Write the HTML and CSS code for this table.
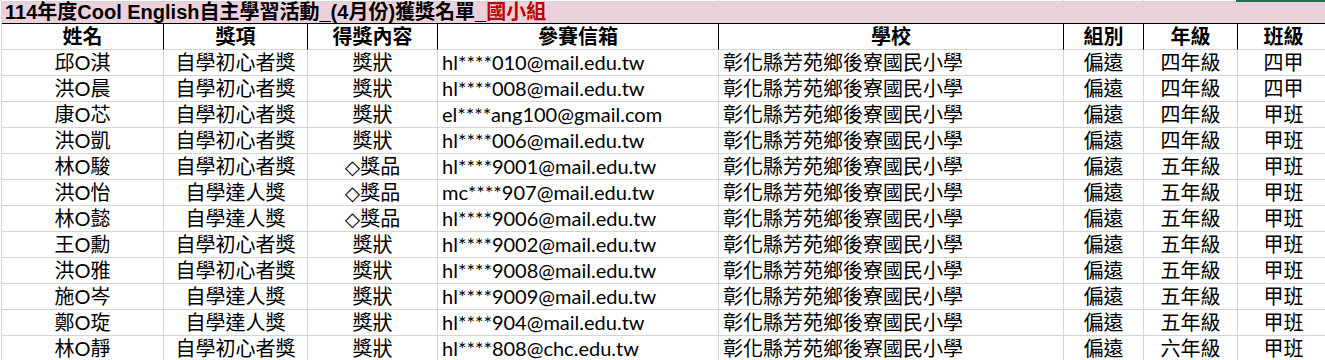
FILE: index.html
```html
<!DOCTYPE html>
<html lang="zh-Hant">
<head>
<meta charset="utf-8">
<title>114年度Cool English自主學習活動 獲獎名單</title>
<link rel="stylesheet" href="styles.css">
</head>
<body>
<div class="sheet">
  <div class="cell top"></div><div class="cell top"></div><div class="cell top"></div><div class="cell top"></div><div class="cell top"></div><div class="cell top"></div><div class="cell top"></div><div class="cell top sel"></div>
  <div class="title">114年度Cool English自主學習活動_(4月份)獲獎名單_<span class="red">國小組</span></div>
  <div class="cell head">姓名</div><div class="cell head">獎項</div><div class="cell head">得獎內容</div><div class="cell head">參賽信箱</div><div class="cell head">學校</div><div class="cell head">組別</div><div class="cell head">年級</div><div class="cell head">班級</div>

  <div class="cell">邱O淇</div><div class="cell">自學初心者獎</div><div class="cell">獎狀</div><div class="cell left">hl****010@mail.edu.tw</div><div class="cell left">彰化縣芳苑鄉後寮國民小學</div><div class="cell">偏遠</div><div class="cell">四年級</div><div class="cell">四甲</div>
  <div class="cell">洪O晨</div><div class="cell">自學初心者獎</div><div class="cell">獎狀</div><div class="cell left">hl****008@mail.edu.tw</div><div class="cell left">彰化縣芳苑鄉後寮國民小學</div><div class="cell">偏遠</div><div class="cell">四年級</div><div class="cell">四甲</div>
  <div class="cell">康O芯</div><div class="cell">自學初心者獎</div><div class="cell">獎狀</div><div class="cell left">el****ang100@gmail.com</div><div class="cell left">彰化縣芳苑鄉後寮國民小學</div><div class="cell">偏遠</div><div class="cell">四年級</div><div class="cell">甲班</div>
  <div class="cell">洪O凱</div><div class="cell">自學初心者獎</div><div class="cell">獎狀</div><div class="cell left">hl****006@mail.edu.tw</div><div class="cell left">彰化縣芳苑鄉後寮國民小學</div><div class="cell">偏遠</div><div class="cell">四年級</div><div class="cell">甲班</div>
  <div class="cell">林O駿</div><div class="cell">自學初心者獎</div><div class="cell">◇獎品</div><div class="cell left">hl****9001@mail.edu.tw</div><div class="cell left">彰化縣芳苑鄉後寮國民小學</div><div class="cell">偏遠</div><div class="cell">五年級</div><div class="cell">甲班</div>
  <div class="cell">洪O怡</div><div class="cell">自學達人獎</div><div class="cell">◇獎品</div><div class="cell left">mc****907@mail.edu.tw</div><div class="cell left">彰化縣芳苑鄉後寮國民小學</div><div class="cell">偏遠</div><div class="cell">五年級</div><div class="cell">甲班</div>
  <div class="cell">林O懿</div><div class="cell">自學達人獎</div><div class="cell">◇獎品</div><div class="cell left">hl****9006@mail.edu.tw</div><div class="cell left">彰化縣芳苑鄉後寮國民小學</div><div class="cell">偏遠</div><div class="cell">五年級</div><div class="cell">甲班</div>
  <div class="cell">王O勳</div><div class="cell">自學初心者獎</div><div class="cell">獎狀</div><div class="cell left">hl****9002@mail.edu.tw</div><div class="cell left">彰化縣芳苑鄉後寮國民小學</div><div class="cell">偏遠</div><div class="cell">五年級</div><div class="cell">甲班</div>
  <div class="cell">洪O雅</div><div class="cell">自學初心者獎</div><div class="cell">獎狀</div><div class="cell left">hl****9008@mail.edu.tw</div><div class="cell left">彰化縣芳苑鄉後寮國民小學</div><div class="cell">偏遠</div><div class="cell">五年級</div><div class="cell">甲班</div>
  <div class="cell">施O岑</div><div class="cell">自學達人獎</div><div class="cell">獎狀</div><div class="cell left">hl****9009@mail.edu.tw</div><div class="cell left">彰化縣芳苑鄉後寮國民小學</div><div class="cell">偏遠</div><div class="cell">五年級</div><div class="cell">甲班</div>
  <div class="cell">鄭O琁</div><div class="cell">自學達人獎</div><div class="cell">獎狀</div><div class="cell left">hl****904@mail.edu.tw</div><div class="cell left">彰化縣芳苑鄉後寮國民小學</div><div class="cell">偏遠</div><div class="cell">五年級</div><div class="cell">甲班</div>
  <div class="cell">林O靜</div><div class="cell">自學初心者獎</div><div class="cell">獎狀</div><div class="cell left">hl****808@chc.edu.tw</div><div class="cell left">彰化縣芳苑鄉後寮國民小學</div><div class="cell">偏遠</div><div class="cell">六年級</div><div class="cell">甲班</div>
</div>
</body>
</html>
```

FILE: styles.css
```css
html, body {
  margin: 0;
  padding: 0;
  background: #ffffff;
  overflow: hidden;
}

body {
  font-family: "Lato", "DejaVu Sans", "Noto Sans CJK TC", sans-serif;
  color: #000;
}

.sheet {
  display: grid;
  grid-template-columns: 162px 144px 130px 281px 345px 80px 94px 92px;
  grid-template-rows: 2px 22px 26px repeat(12, 26px);
  width: 1328px;
  margin-left: 1px;
  border-left: 1px solid #d4d4d4;
}

.cell {
  box-sizing: border-box;
  border-right: 1px solid #d4d4d4;
  border-bottom: 1px solid #d4d4d4;
  font-size: 20px;
  line-height: 25px;
  text-align: center;
  white-space: nowrap;
}

.cell.left {
  text-align: left;
  padding-left: 4px;
}

.cell.top {
  height: 2px;
  overflow: hidden;
}

.cell.sel {
  position: relative;
  overflow: visible;
}

.cell.sel::before {
  content: "";
  position: absolute;
  left: -2px;
  right: -4px;
  top: 0;
  height: 2px;
  background: #217346;
}

.title {
  grid-column: 1 / -1;
  box-sizing: border-box;
  height: 22px;
  background: #ead1dc;
  border-bottom: 1px solid #000;
  font-family: "Liberation Sans", "Noto Sans CJK TC", sans-serif;
  font-weight: bold;
  font-size: 20px;
  line-height: 21px;
  padding-left: 3px;
  white-space: nowrap;
}

.title .red {
  color: #c00000;
}

.cell.head {
  font-family: "Noto Sans CJK TC", sans-serif;
  font-weight: bold;
  line-height: 24px;
  border-right-color: #000;
}
```
